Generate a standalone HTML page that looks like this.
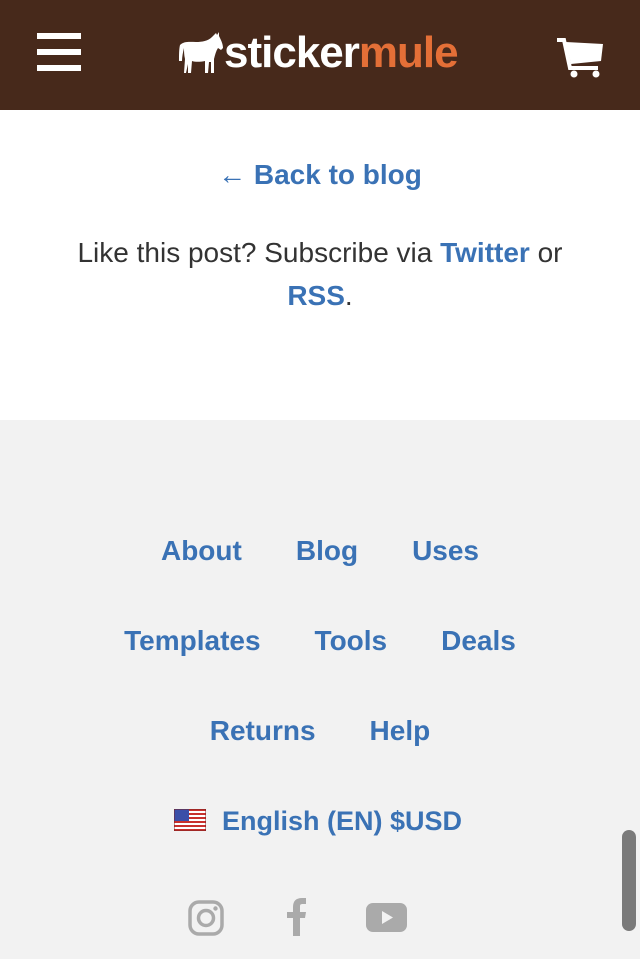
<!DOCTYPE html>
<html><head><meta charset="utf-8"><style>
*{margin:0;padding:0;box-sizing:border-box}
body{width:640px;height:959px;overflow:hidden;font-family:"Liberation Sans",Arial,sans-serif;background:#f2f2f2;position:relative}
.hdr{position:absolute;left:0;top:0;width:640px;height:110px;background:#47291b}
.top{position:absolute;left:0;top:110px;width:640px;height:310px;background:#fff}
a{color:#3a72b5;font-weight:bold;text-decoration:none}
.c{position:absolute;left:0;width:640px;text-align:center;font-size:28px;line-height:32px}
.row{position:absolute;left:0;width:640px;text-align:center;font-size:28px;line-height:32px}
.row a{margin:0 27px}
</style></head><body>
<div class="hdr">
<svg style="position:absolute;left:37px;top:33px" width="44" height="40"><rect x="0" y="0" width="44" height="6" fill="#fff"/><rect x="0" y="16" width="44" height="6" fill="#fff"/><rect x="0" y="32" width="44" height="6" fill="#fff"/></svg>
<svg style="position:absolute;left:178px;top:31px" width="46" height="44" viewBox="0 0 46 44"><path d="M2 14 C6 10 12 11 18 11 C24 11 30 10 34 6 L38 2 L39 4 L41 1 L41 5 C43 9 45 13 45 17 L43 19 L40 17 C38 20 37 24 36 28 L36 42 L33 42 L33 31 L31 31 L30 42 L27 42 L27 30 C22 31 17 31 14 30 L13 42 L10 42 L10 33 L8 42 L6 42 L7 28 C6 24 6 20 6 17 C5 21 4 26 4 30 L1 30 C1 24 1 18 2 14Z" fill="#fff"/></svg>
<div style="position:absolute;left:224px;top:24px;font-size:44px;font-weight:bold;color:#fff;letter-spacing:-1px;line-height:58px">sticker<span style="color:#e46f37">mule</span></div>
<svg style="position:absolute;left:556px;top:38px" width="48" height="40" viewBox="0 0 48 40"><path d="M1 2 H8 L14 30 H42" stroke="#fff" stroke-width="4" fill="none"/><path d="M10 4 L47 6 L45 23 L15 26 Z" fill="#fff"/><circle cx="18" cy="36" r="3.5" fill="#fff"/><circle cx="40" cy="36" r="3.5" fill="#fff"/></svg>
</div>
<div class="top"></div>
<div class="c" style="top:159px"><a href="#">← Back to blog</a></div>
<div class="c" style="top:237px;color:#333">Like this post? Subscribe via <a href="#">Twitter</a> or</div>
<div class="c" style="top:280px;color:#333"><a href="#">RSS</a>.</div>
<div class="row" style="top:535px"><a href="#">About</a><a href="#">Blog</a><a href="#">Uses</a></div>
<div class="row" style="top:625px"><a href="#">Templates</a><a href="#">Tools</a><a href="#">Deals</a></div>
<div class="row" style="top:715px"><a href="#">Returns</a><a href="#">Help</a></div>
<div style="position:absolute;left:222px;top:805px;font-size:27px;line-height:32px"><a href="#">English (EN) $USD</a></div>
<svg style="position:absolute;left:174px;top:809px" width="32" height="22" viewBox="0 0 32 22"><rect width="32" height="22" fill="#fff"/><g fill="#c8302c"><rect y="0" width="32" height="2"/><rect y="4" width="32" height="2"/><rect y="8" width="32" height="2"/><rect y="12" width="32" height="2"/><rect y="16" width="32" height="2"/><rect y="20" width="32" height="2"/></g><rect width="15" height="12" fill="#3b4fa8"/><rect width="32" height="22" fill="none" stroke="#7a2020" stroke-width="1"/></svg>
<svg style="position:absolute;left:188px;top:900px" width="36" height="36" viewBox="0 0 36 36"><rect x="2" y="2" width="32" height="32" rx="9" fill="none" stroke="#aaa" stroke-width="3.5"/><circle cx="18" cy="18" r="7.5" fill="none" stroke="#aaa" stroke-width="3.5"/><circle cx="27.5" cy="8.5" r="2.2" fill="#aaa"/></svg>
<svg style="position:absolute;left:286px;top:898px" width="22" height="38" viewBox="0 0 22 38"><path d="M7 38 V20 H1 V14 H7 V9 C7 3 10 0 16 0 H20 V6 H17 C14 6 14 7 14 9 V14 H20 L19 20 H14 V38 Z" fill="#aaa"/></svg>
<svg style="position:absolute;left:366px;top:903px" width="41" height="29" viewBox="0 0 41 29"><rect width="41" height="29" rx="7" fill="#aaa"/><path d="M16 8 L27 14.5 L16 21 Z" fill="#f2f2f2"/></svg>
<div style="position:absolute;left:622px;top:830px;width:14px;height:101px;border-radius:7px;background:#7a7a7a"></div>
</body></html>
